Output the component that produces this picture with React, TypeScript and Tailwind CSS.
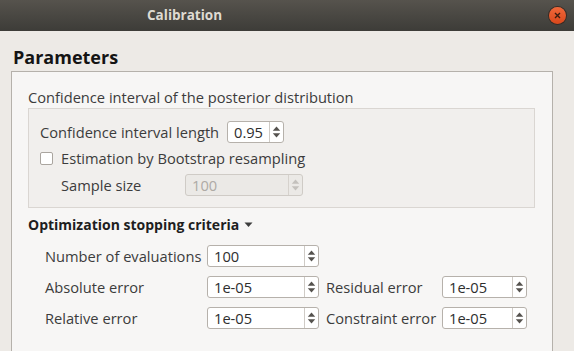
import React from "react";

const FONT = { fontFamily: '"Open Sans", "Noto Sans", "DejaVu Sans", sans-serif' };

function Arrows({ disabled }: { disabled?: boolean }) {
  const c = disabled ? "#c4c1bd" : "#55524e";
  return (
    <svg width="9" height="14" viewBox="0 0 9 14">
      <path d="M0.8 5.8 L4.5 1.5 L8.2 5.8 Z" fill={c} />
      <path d="M0.8 8.2 L4.5 12.5 L8.2 8.2 Z" fill={c} />
    </svg>
  );
}

function Spin({ value, w, disabled }: { value: string; w: string; disabled?: boolean }) {
  return (
    <div
      className={`flex h-[22px] ${w} shrink-0 rounded-[3px] border ${
        disabled ? "border-[#cfcbc6] bg-[#ebe9e6] text-[#aeaaa5]" : "border-[#b6b1ab] bg-white text-[#2e2e2e]"
      }`}
    >
      <div className="flex flex-1 items-center pl-[6px] text-[14.67px] leading-none">{value}</div>
      <div className={`flex w-[14px] items-center justify-center border-l ${disabled ? "border-[#d6d2cd]" : "border-[#cfcbc6]"}`}>
        <Arrows disabled={disabled} />
      </div>
    </div>
  );
}

export default function App() {
  return (
    <div className="relative h-[351px] w-[574px] overflow-hidden bg-[#edeae6] text-[#3c3c3c]" style={FONT}>
      {/* title bar */}
      <div className="flex h-[31px] items-center bg-gradient-to-b from-[#56534d] to-[#3d3c38] pl-[147px] pr-[8px]">
        <span className="text-[13.5px] font-bold text-[#dfdbd2]">Calibration</span>
        <div className="ml-auto flex h-[17px] w-[17px] items-center justify-center rounded-full bg-gradient-to-b from-[#f0683a] to-[#d9471a] shadow-[0_0_0_1px_#3a2a22]">
          <svg width="7" height="7" viewBox="0 0 7 7">
            <path d="M1 1 L6 6 M6 1 L1 6" stroke="#3b1d10" strokeWidth="1.4" />
          </svg>
        </div>
      </div>

      {/* body */}
      <div className="flex flex-col pl-[11px] pt-[15px]">
        <div className="pl-[2px] text-[18px] font-bold leading-[22px] text-[#141414]">Parameters</div>
        <div className="mt-[3px] h-[300px] w-[542px] border border-[#b5b1ab] bg-[#f7f6f5] pl-[16px] pr-[17px] pt-[15px]">
          <div className="text-[14.67px] leading-[20px] text-[#3c3c3c]">Confidence interval of the posterior distribution</div>
          <div className="mt-[1px] flex h-[100px] w-[507px] flex-col border border-[#dad6d2] bg-[#f1efed] pl-[11px] pt-[12px] text-[14.67px] leading-[20px]">
            <div className="flex items-center">
              <span className="w-[187px]">Confidence interval length</span>
              <Spin value="0.95" w="w-[57px]" />
            </div>
            <div className="mt-[5px] flex items-center">
              <div className="h-[13px] w-[13px] rounded-[2px] border border-[#aaa59f] bg-white" />
              <span className="ml-[8px]">Estimation by Bootstrap resampling</span>
            </div>
            <div className="mt-[6px] flex items-center pl-[21px]">
              <span className="w-[124px]">Sample size</span>
              <Spin value="100" w="w-[118px]" disabled />
            </div>
          </div>
          <div className="mt-[7px] flex items-center leading-[20px]">
            <span className="text-[14px] font-bold text-[#1e1e1e]">Optimization stopping criteria</span>
            <svg className="ml-[5px]" width="9" height="6" viewBox="0 0 9 6">
              <path d="M0.5 0.5 L8.5 0.5 L4.5 5 Z" fill="#3c3c3c" />
            </svg>
          </div>
          <div className="mt-[10px] flex flex-col gap-[9px] pl-[17px] text-[14.67px] leading-[20px]">
            <div className="flex items-center">
              <span className="w-[162px]">Number of evaluations</span>
              <Spin value="100" w="w-[112px]" />
            </div>
            <div className="flex items-center">
              <span className="w-[162px]">Absolute error</span>
              <Spin value="1e-05" w="w-[112px]" />
              <span className="ml-[7px] w-[116px]">Residual error</span>
              <Spin value="1e-05" w="w-[85px]" />
            </div>
            <div className="flex items-center">
              <span className="w-[162px]">Relative error</span>
              <Spin value="1e-05" w="w-[112px]" />
              <span className="ml-[7px] w-[116px]">Constraint error</span>
              <Spin value="1e-05" w="w-[85px]" />
            </div>
          </div>
        </div>
      </div>
    </div>
  );
}
